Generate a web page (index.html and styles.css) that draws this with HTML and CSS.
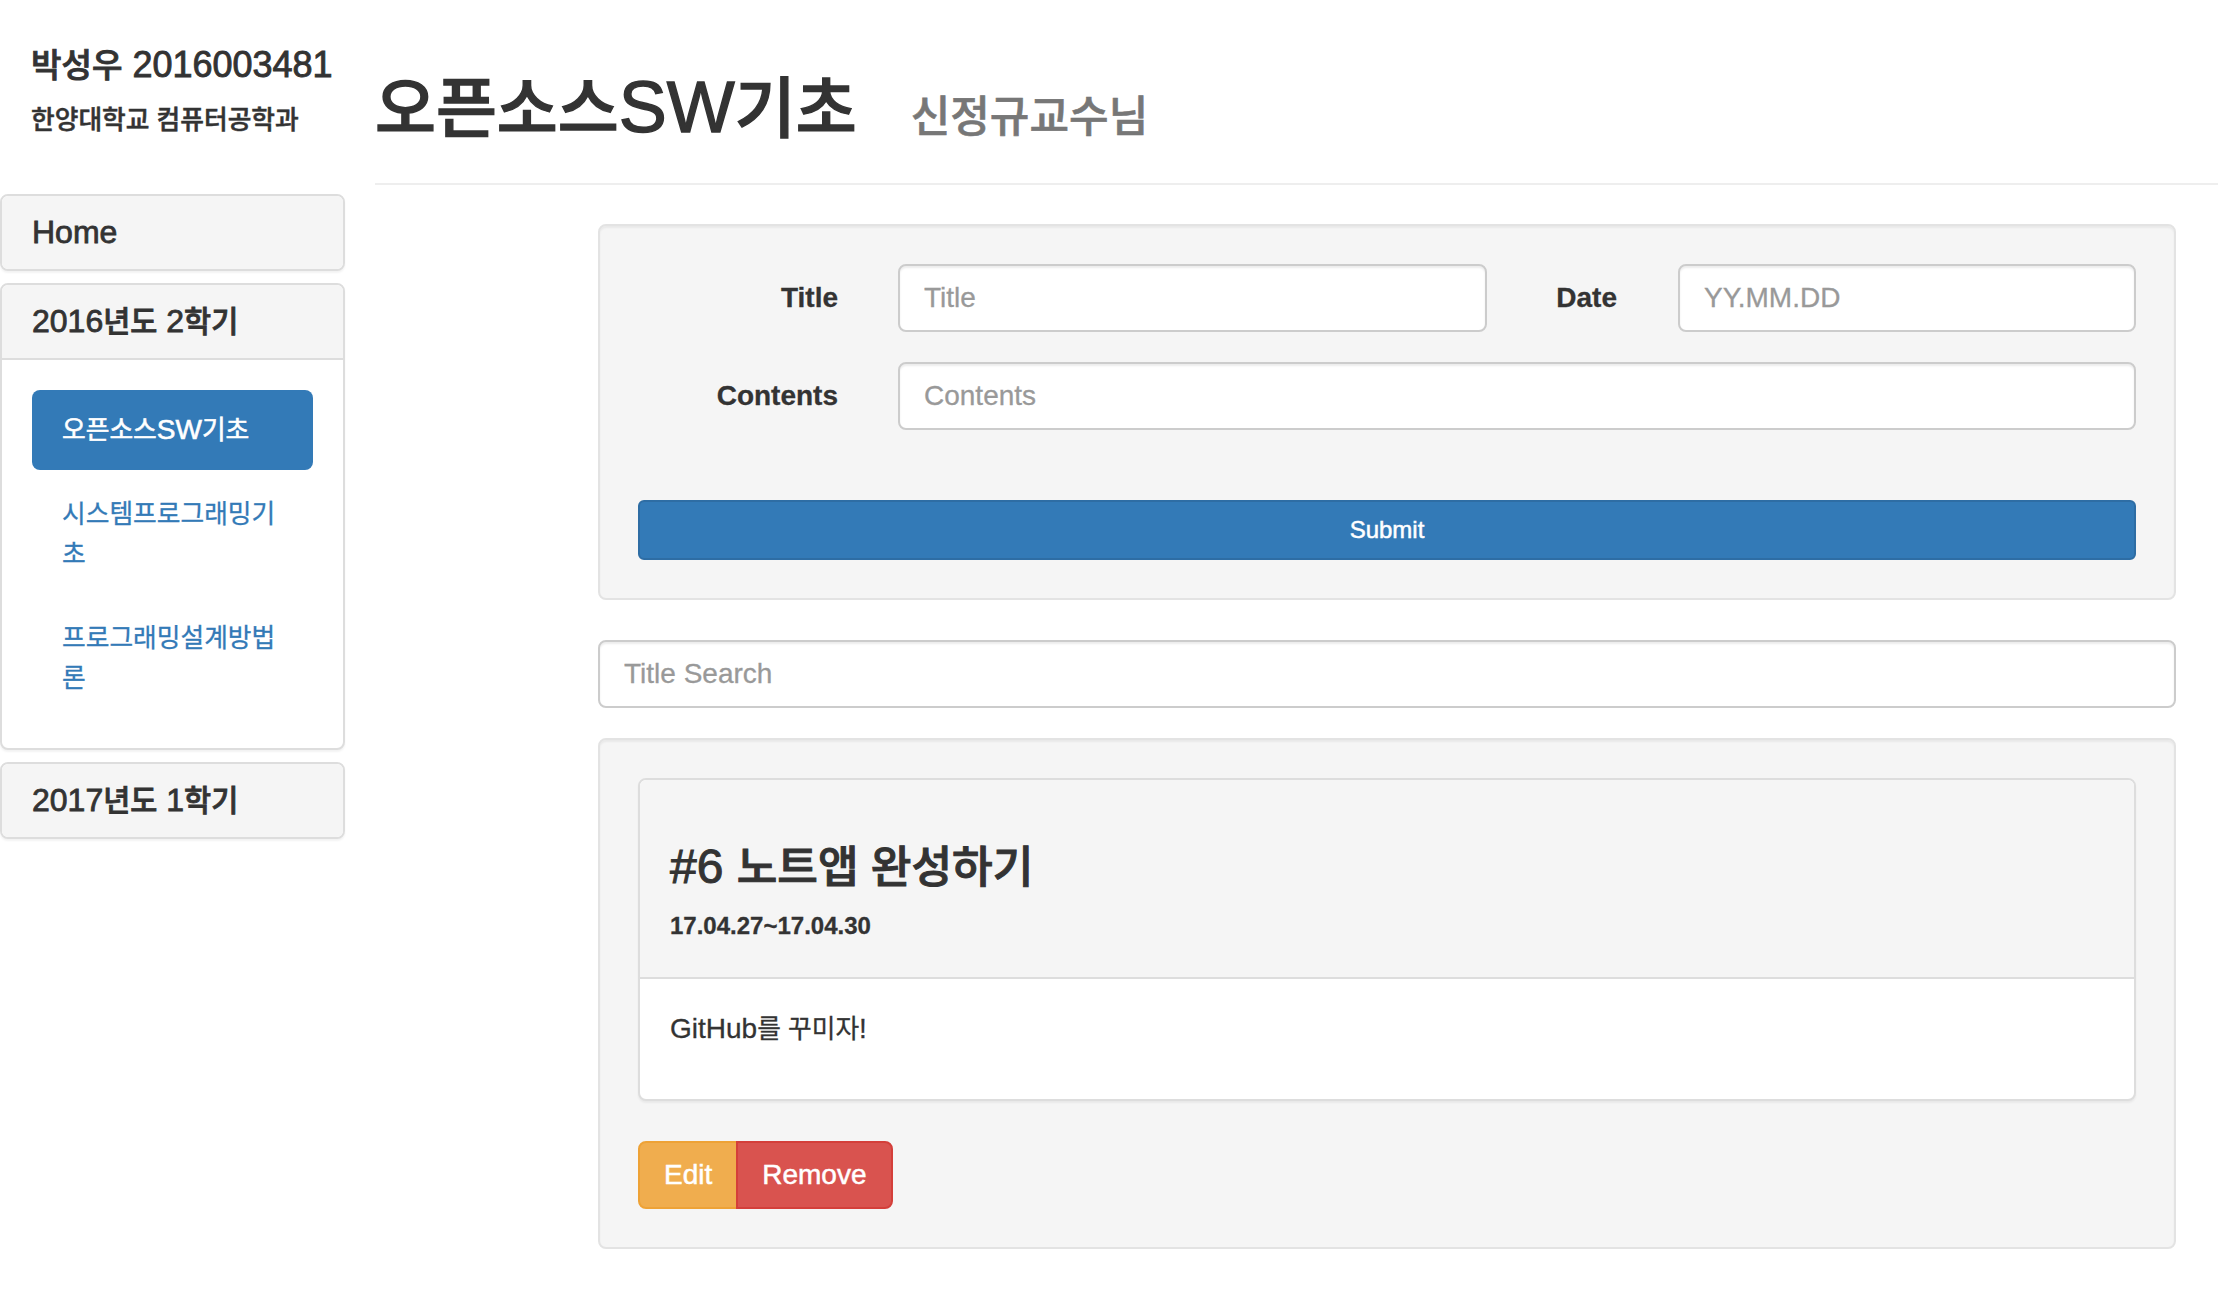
FILE: index.html
```html
<!DOCTYPE html>
<html lang="ko">
<head>
<meta charset="utf-8">
<title>오픈소스SW기초</title>
<link rel="stylesheet" href="styles.css">
</head>
<body>
<div class="layout">
  <aside class="sidebar">
    <div class="profile">
      <h4 class="profile-name"><span class="ko">박성우</span> 2016003481</h4>
      <h5 class="profile-dept"><span class="ko">한양대학교 컴퓨터공학과</span></h5>
    </div>
    <div class="panel-group">
      <div class="panel">
        <div class="panel-heading"><h4 class="panel-title">Home</h4></div>
      </div>
      <div class="panel">
        <div class="panel-heading open"><h4 class="panel-title">2016<span class="ko">년도</span> 2<span class="ko">학기</span></h4></div>
        <div class="panel-body">
          <ul class="nav-pills">
            <li class="active"><a href="#"><span class="ko">오픈소스</span>SW<span class="ko">기초</span></a></li>
            <li><a href="#"><span class="ko">시스템프로그래밍기초</span></a></li>
            <li><a href="#"><span class="ko">프로그래밍설계방법론</span></a></li>
          </ul>
        </div>
      </div>
      <div class="panel">
        <div class="panel-heading"><h4 class="panel-title">2017<span class="ko">년도</span> 1<span class="ko">학기</span></h4></div>
      </div>
    </div>
  </aside>

  <main class="main">
    <div class="page-header">
      <h1><span class="ko">오픈소스</span>SW<span class="ko">기초</span> <small class="subtitle"><span class="ko">신정규교수님</span></small></h1>
    </div>

    <div class="content">
      <form class="well note-form">
        <div class="form-row">
          <label class="control-label">Title</label>
          <input class="form-control title-input" type="text" placeholder="Title">
          <label class="control-label date-label">Date</label>
          <input class="form-control grow" type="text" placeholder="YY.MM.DD">
        </div>
        <div class="form-row">
          <label class="control-label">Contents</label>
          <input class="form-control grow" type="text" placeholder="Contents">
        </div>
        <button class="btn-submit" type="button">Submit</button>
      </form>

      <input class="form-control search-input" type="text" placeholder="Title Search">

      <div class="well notes">
        <div class="note-panel">
          <div class="note-heading">
            <h3 class="note-title">#6 <span class="ko">노트앱 완성하기</span></h3>
            <h6 class="note-date">17.04.27~17.04.30</h6>
          </div>
          <div class="note-body">
            <p>GitHub<span class="ko">를 꾸미자</span>!</p>
          </div>
        </div>
        <div class="btn-group">
          <button class="btn btn-edit" type="button">Edit</button>
          <button class="btn btn-remove" type="button">Remove</button>
        </div>
      </div>
    </div>
  </main>
</div>
</body>
</html>
```

FILE: styles.css
```css
* {
  box-sizing: border-box;
}

html,
body {
  margin: 0;
  padding: 0;
}

body {
  font-family: "Liberation Sans", "Noto Sans CJK KR", sans-serif;
  font-size: 28px;
  line-height: 40px;
  color: #333;
  background: #fff;
  -webkit-text-stroke: 0.3px currentColor;
}

.ko {
  font-size: 0.92em;
  line-height: 1;
}

h1, h3, h4, h5, h6 {
  margin: 0;
  font-weight: 500;
}

.layout {
  display: grid;
  grid-template-columns: 345px 1fr;
  column-gap: 30px;
}

/* ---------- sidebar ---------- */
.profile {
  padding: 45px 0 0 31px;
}

.profile-name {
  font-size: 36px;
  line-height: 40px;
  -webkit-text-stroke: 0.9px currentColor;
}

.profile-dept {
  font-size: 28px;
  line-height: 31px;
  margin-top: 19px;
  -webkit-text-stroke: 0.5px currentColor;
}

.panel-group {
  margin-top: 59px;
}

.panel {
  background: #fff;
  border: 2px solid #ddd;
  border-radius: 8px;
  box-shadow: 0 2px 2px rgba(0, 0, 0, 0.05);
  overflow: hidden;
}

.panel + .panel {
  margin-top: 12px;
}

.panel-heading {
  background: #f5f5f5;
  padding: 19px 30px;
}

.panel-heading.open {
  border-bottom: 2px solid #ddd;
}

.panel-title {
  font-size: 32px;
  line-height: 35px;
  -webkit-text-stroke: 0.8px currentColor;
}

.panel-body {
  padding: 30px;
}

.nav-pills {
  list-style: none;
  margin: 0;
  padding: 0;
}

.nav-pills li + li {
  margin-top: 4px;
}

.nav-pills a {
  display: block;
  padding: 20px 30px;
  border-radius: 8px;
  color: #337ab7;
  text-decoration: none;
  font-size: 28px;
  line-height: 40px;
}

.nav-pills .active a {
  background: #337ab7;
  color: #fff;
  -webkit-text-stroke: 0.6px currentColor;
}

/* ---------- header ---------- */
.page-header {
  padding: 67px 0 16px;
  border-bottom: 2px solid #eee;
}

.page-header h1 {
  font-size: 72px;
  line-height: 80px;
  margin: 0 0 20px;
  -webkit-text-stroke: 1.4px currentColor;
}

.subtitle {
  font-size: 65%;
  line-height: 1;
  color: #777;
  margin-left: 34px;
  -webkit-text-stroke: 0.6px currentColor;
}

/* ---------- content ---------- */
.content {
  padding: 39px 42px 0 223px;
}

.well {
  background: #f5f5f5;
  border: 2px solid #e3e3e3;
  border-radius: 8px;
  padding: 38px;
  box-shadow: inset 0 2px 2px rgba(0, 0, 0, 0.05);
}

.form-row {
  display: flex;
  align-items: center;
}

.form-row + .form-row {
  margin-top: 30px;
}

.control-label {
  flex: 0 0 200px;
  margin-right: 60px;
  text-align: right;
  font-weight: bold;
  font-size: 28px;
}

.control-label.date-label {
  flex-basis: 130px;
  margin-right: 61px;
}

.form-control {
  display: block;
  height: 68px;
  padding: 0 24px;
  border: 2px solid #ccc;
  border-radius: 8px;
  background: #fff;
  box-shadow: inset 0 2px 2px rgba(0, 0, 0, 0.075);
  font-family: "Liberation Sans", "Noto Sans CJK KR", sans-serif;
  font-size: 28px;
  color: #555;
  outline: none;
}

.form-control::placeholder {
  color: #999;
}

.title-input {
  flex: 0 0 589px;
  width: 589px;
}

.grow {
  flex: 1 1 auto;
  min-width: 0;
}

.btn-submit {
  display: block;
  width: 100%;
  height: 60px;
  margin-top: 70px;
  padding: 0;
  border: 2px solid #2e6da4;
  border-radius: 6px;
  background: #337ab7;
  color: #fff;
  font-family: "Liberation Sans", sans-serif;
  font-size: 24px;
  -webkit-text-stroke: 0.5px currentColor;
}

.search-input {
  width: 100%;
  margin-top: 40px;
}

.notes {
  margin-top: 30px;
}

.note-panel {
  background: #fff;
  border: 2px solid #ddd;
  border-radius: 8px;
  box-shadow: 0 2px 2px rgba(0, 0, 0, 0.05);
  overflow: hidden;
}

.note-heading {
  background: #f5f5f5;
  border-bottom: 2px solid #ddd;
  padding: 20px 30px;
}

.note-title {
  font-size: 48px;
  line-height: 53px;
  margin: 40px 0 20px;
  -webkit-text-stroke: 1px currentColor;
}

.note-date {
  font-size: 24px;
  line-height: 26px;
  font-weight: bold;
  margin: 20px 0 18px;
}

.note-body {
  padding: 30px;
}

.note-body p {
  margin: 0 0 20px;
}

.btn-group {
  display: flex;
  margin-top: 40px;
}

.btn {
  height: 68px;
  padding: 0 24px;
  border: 2px solid;
  color: #fff;
  font-family: "Liberation Sans", sans-serif;
  font-size: 28px;
  -webkit-text-stroke: 0.5px currentColor;
}

.btn-edit {
  background: #f0ad4e;
  border-color: #eea236;
  border-radius: 8px 0 0 8px;
}

.btn-remove {
  background: #d9534f;
  border-color: #d43f3a;
  border-radius: 0 8px 8px 0;
  margin-left: -2px;
}
```
